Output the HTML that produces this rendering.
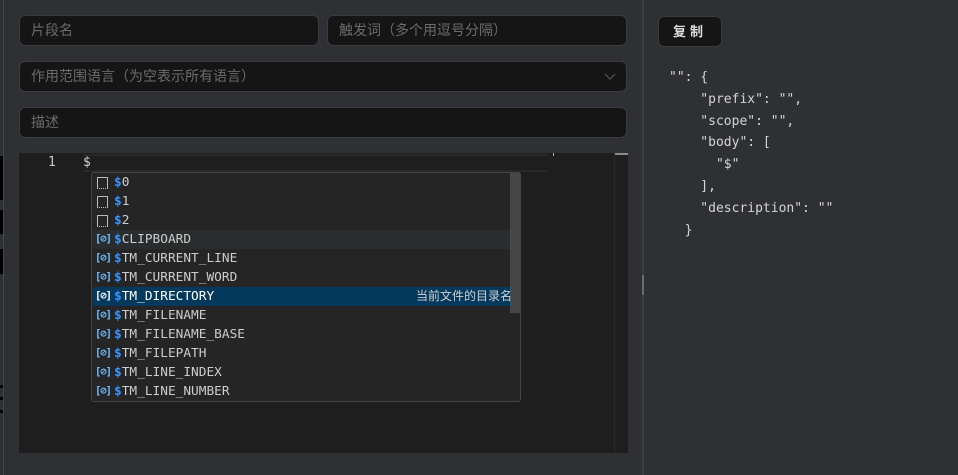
<!DOCTYPE html>
<html><head><meta charset="utf-8"><style>
*{margin:0;padding:0;box-sizing:border-box}
body{width:958px;height:475px;background:#2f3033;position:relative;overflow:hidden;font-family:"Liberation Sans","Noto Sans CJK SC",sans-serif}
.a{position:absolute}
.inp{position:absolute;background:#151515;border:1px solid #3a3b3e;border-radius:6px;color:#6b6b6b;font-size:14px;padding-left:11px;line-height:29px}
.mono{font-family:"DejaVu Sans Mono","Liberation Mono","Noto Sans CJK SC",monospace}
.row{position:absolute;left:1px;width:418px;height:19px;font-size:12.8px;line-height:19px;color:#cccccc;white-space:nowrap}
.row .t{position:absolute;left:21px}
.d{color:#3794ff;font-weight:bold}
.sq{position:absolute;left:4px;top:4px;width:11px;height:12px;border:1px solid #bbb;border-bottom:1px dotted #bbb}
.vi{position:absolute;left:2px;top:0;font-size:10.5px;color:#75beff;letter-spacing:-1px;font-weight:bold}
</style></head><body>
<div class="a" style="left:3px;top:0;width:1px;height:475px;background:#45464a"></div>
<div class="a" style="left:0;top:156px;width:3px;height:44px;background:#000"></div>
<div class="a" style="left:0;top:210px;width:3px;height:24px;background:#000"></div>
<div class="a" style="left:0;top:249px;width:3px;height:25px;background:#000"></div>
<div class="a" style="left:0;top:385px;width:3px;height:3px;background:#000"></div>
<div class="a" style="left:0;top:397px;width:3px;height:3px;background:#000"></div>
<div class="a" style="left:0;top:410px;width:3px;height:3px;background:#000"></div>

<div class="inp" style="left:19px;top:15px;width:300px;height:31px">片段名</div>
<div class="inp" style="left:327px;top:15px;width:300px;height:31px">触发词（多个用逗号分隔）</div>
<div class="inp" style="left:19px;top:61px;width:608px;height:31px">作用范围语言（为空表示所有语言）
<svg class="a" style="right:10px;top:11px" width="12" height="8" viewBox="0 0 12 8"><path d="M1 1l5 5 5-5" stroke="#555" fill="none" stroke-width="1.2"/></svg></div>
<div class="inp" style="left:19px;top:107px;width:608px;height:31px">描述</div>

<div class="a" style="left:19px;top:153px;width:609px;height:300px;background:#1e1e1e"></div>
<div class="a" style="left:614px;top:153px;width:1px;height:300px;background:#2a2a2a"></div>
<div class="a" style="left:615px;top:153px;width:13px;height:2px;background:#8a8a8a"></div>
<div class="a" style="left:83px;top:154px;width:465px;height:18px;border-top:2px solid #282828;border-bottom:2px solid #282828"></div>
<div class="a mono" style="left:48px;top:154px;font-size:13px;line-height:18px;color:#c6c6c6">1</div>
<div class="a mono" style="left:83px;top:154px;font-size:13px;line-height:18px;color:#d4d4d4">$</div>
<div class="a" style="left:553px;top:153px;width:1px;height:3px;background:#aaa"></div>

<div class="a mono" style="left:91px;top:172px;width:430px;height:230px;background:#252526;border:1px solid #454545;border-radius:3px">
<div class="row" style="top:0px"><span class="sq"></span><span class="t"><span class="d">$</span>0</span></div>
<div class="row" style="top:19px"><span class="sq"></span><span class="t"><span class="d">$</span>1</span></div>
<div class="row" style="top:38px"><span class="sq"></span><span class="t"><span class="d">$</span>2</span></div>
<div class="row" style="top:57px;background:#2a2d2e"><span class="vi">[⊘]</span><span class="t"><span class="d">$</span>CLIPBOARD</span></div>
<div class="row" style="top:76px"><span class="vi">[⊘]</span><span class="t"><span class="d">$</span>TM_CURRENT_LINE</span></div>
<div class="row" style="top:95px"><span class="vi">[⊘]</span><span class="t"><span class="d">$</span>TM_CURRENT_WORD</span></div>
<div class="row" style="top:114px;background:#04395e;color:#fff"><span class="vi" style="color:#fff">[⊘]</span><span class="t"><span class="d">$</span>TM_DIRECTORY</span><span class="a" style="left:323px;top:0;font-size:12px;color:#d0d0d0;font-family:'Liberation Sans','Noto Sans CJK SC',sans-serif;white-space:nowrap">当前文件的目录名</span></div>
<div class="row" style="top:133px"><span class="vi">[⊘]</span><span class="t"><span class="d">$</span>TM_FILENAME</span></div>
<div class="row" style="top:152px"><span class="vi">[⊘]</span><span class="t"><span class="d">$</span>TM_FILENAME_BASE</span></div>
<div class="row" style="top:171px"><span class="vi">[⊘]</span><span class="t"><span class="d">$</span>TM_FILEPATH</span></div>
<div class="row" style="top:190px"><span class="vi">[⊘]</span><span class="t"><span class="d">$</span>TM_LINE_INDEX</span></div>
<div class="row" style="top:209px"><span class="vi">[⊘]</span><span class="t"><span class="d">$</span>TM_LINE_NUMBER</span></div>
<div class="a" style="left:418px;top:0;width:10px;height:140px;background:rgba(121,121,121,0.4)"></div>
</div>

<div class="a" style="left:642px;top:0;width:2px;height:475px;background:#3d3e41"></div>
<div class="a" style="left:642px;top:275px;width:2px;height:20px;background:#6a6b6e"></div>

<div class="a" style="left:658px;top:16px;width:64px;height:31px;background:#151515;border:1px solid #3a3b3e;border-radius:6px;color:#ddd;font-size:13px;font-weight:bold;line-height:29px;text-align:center;letter-spacing:4px">复制</div>
<pre class="a mono" style="left:669px;top:67px;font-size:13px;line-height:21.8px;color:#d4d4d4">"": {
    "prefix": "",
    "scope": "",
    "body": [
      "$"
    ],
    "description": ""
  }</pre>
</body></html>
